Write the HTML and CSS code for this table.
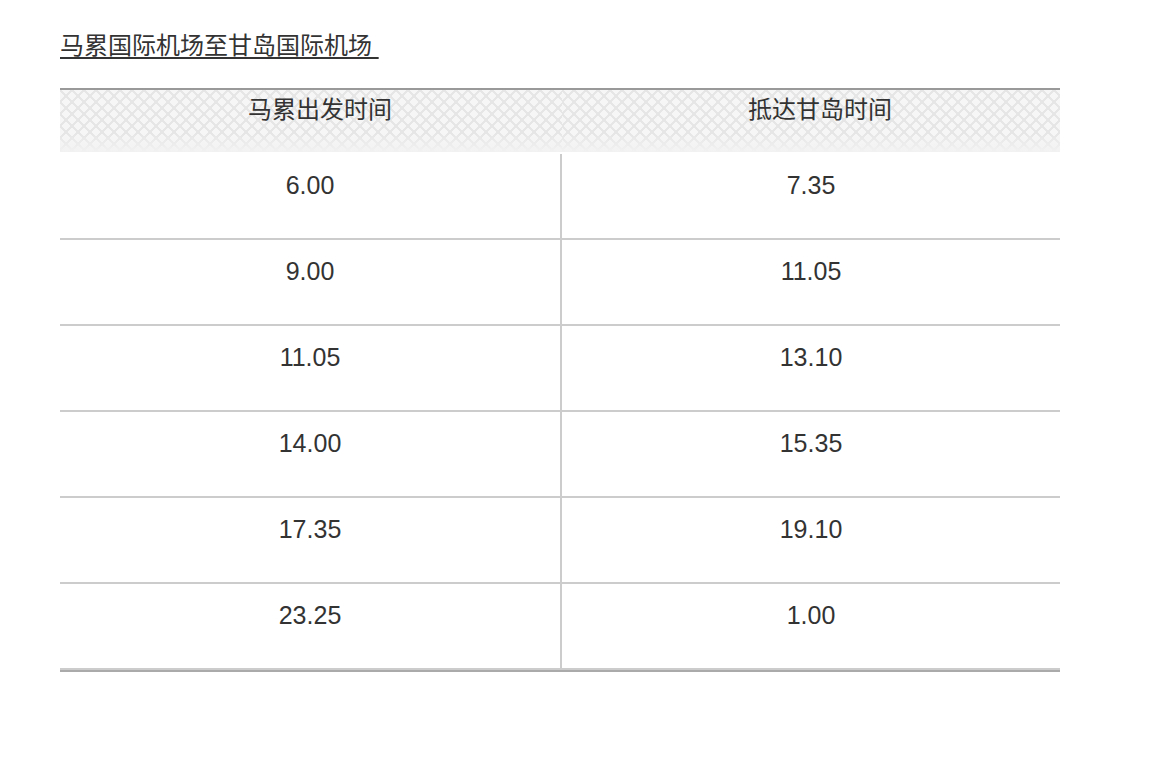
FILE: index.html
```html
<!DOCTYPE html>
<html lang="zh-CN">
<head>
<meta charset="utf-8">
<title>马累国际机场至甘岛国际机场</title>
<link rel="stylesheet" href="styles.css">
</head>
<body>
<main class="page">
  <h2 class="route-title">马累国际机场至甘岛国际机场&nbsp;</h2>
  <table class="schedule">
    <colgroup><col class="col-left"><col class="col-right"></colgroup>
    <thead>
      <tr><th>马累出发时间</th><th>抵达甘岛时间</th></tr>
    </thead>
    <tbody>
      <tr><td>6.00</td><td>7.35</td></tr>
      <tr><td>9.00</td><td>11.05</td></tr>
      <tr><td>11.05</td><td>13.10</td></tr>
      <tr><td>14.00</td><td>15.35</td></tr>
      <tr><td>17.35</td><td>19.10</td></tr>
      <tr><td>23.25</td><td>1.00</td></tr>
    </tbody>
  </table>
</main>
</body>
</html>
```
FILE: styles.css
```css
html, body {
  margin: 0;
  padding: 0;
  background: #fff;
}
body {
  font-family: "Liberation Sans", "Noto Sans CJK SC", sans-serif;
  color: #333;
}
.page {
  padding: 31px 60px 0 60px;
}
.route-title {
  margin: 0;
  font-size: 24px;
  font-weight: normal;
  line-height: 30px;
  color: #333;
  text-decoration: underline;
  text-underline-offset: 3px;
  text-decoration-thickness: 2px;
  display: inline-block;
}
.schedule {
  margin-top: 27px;
  width: 1000px;
  table-layout: fixed;
  border-collapse: separate;
  border-spacing: 0;
  border-top: 2px solid #999;
  border-bottom: 2px solid #aaa;
}
.col-left {
  width: 502px;
}
.col-right {
  width: 498px;
}
.schedule th {
  font-weight: normal;
  font-size: 24px;
  line-height: 30px;
  padding: 5px 0 27px 18px;
  text-align: center;
  color: #333;
  border-bottom: 2px solid #fff;
  background-color: #f6f6f6;
  background-image:
    linear-gradient(to bottom, rgba(246,246,246,0) 70%, rgba(242,242,242,0.95) 100%),
    linear-gradient(45deg, transparent 45%, #e6e6e6 45%, #e6e6e6 55%, transparent 55%),
    linear-gradient(-45deg, transparent 45%, #e6e6e6 45%, #e6e6e6 55%, transparent 55%);
  background-size: 100% 100%, 12px 12px, 12px 12px;
}
.schedule td {
  font-size: 25px;
  line-height: 30px;
  padding: 16px 0 38px;
  text-align: center;
  color: #333;
  border-bottom: 2px solid #ccc;
}
.schedule td:first-child {
  border-right: 2px solid #ccc;
}
```
